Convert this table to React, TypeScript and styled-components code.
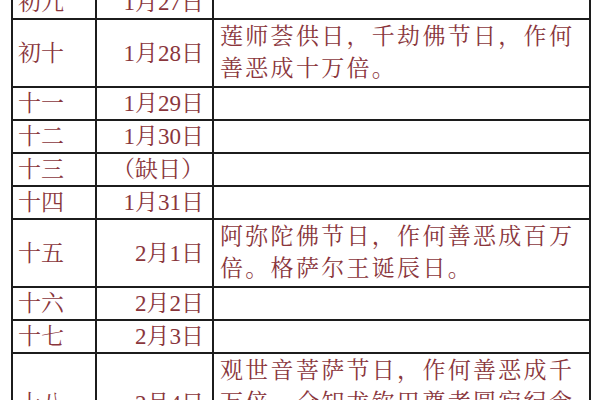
import React from "react";
import styled, { createGlobalStyle } from "styled-components";

const Global = createGlobalStyle`
  html, body { margin: 0; padding: 0; background: #ffffff; }
  body { overflow: hidden; width: 600px; height: 400px; }
`;

const Page = styled.div`
  width: 600px;
  height: 400px;
  overflow: hidden;
  background: #ffffff;
`;

const Table = styled.table`
  border-collapse: collapse;
  table-layout: fixed;
  width: 578px;
  margin: -15px 0 0 11px;
  font-family: "Liberation Serif", "Noto Serif CJK SC", "Noto Sans CJK SC", serif;
  font-size: 23px;
  color: #8a363c;
`;

const Col = styled.col<{ $w: number }>`
  width: ${(p) => p.$w}px;
`;

const Cell = styled.td<{ $align?: "left" | "right" }>`
  border: 2px solid #1c1c1c;
  padding: 0 ${(p) => (p.$align === "right" ? "8px" : "0")} 0 ${(p) => (p.$align === "right" ? "0" : "5px")};
  text-align: ${(p) => p.$align ?? "left"};
  vertical-align: middle;
  line-height: 31px;
  white-space: nowrap;
`;

const NoteCell = styled.td`
  border: 2px solid #1c1c1c;
  padding: 1px 2px 1px 6px;
  line-height: 32px;
  letter-spacing: 2.3px;
  vertical-align: middle;
  white-space: nowrap;
`;

const NoteLine = styled.div`
  display: block;
`;

type Row = { day: string; date: string; note?: string[] };

const rows: Row[] = [
  { day: "初九", date: "1月27日" },
  { day: "初十", date: "1月28日", note: ["莲师荟供日，千劫佛节日，作何", "善恶成十万倍。"] },
  { day: "十一", date: "1月29日" },
  { day: "十二", date: "1月30日" },
  { day: "十三", date: "（缺日）" },
  { day: "十四", date: "1月31日" },
  { day: "十五", date: "2月1日", note: ["阿弥陀佛节日，作何善恶成百万", "倍。格萨尔王诞辰日。"] },
  { day: "十六", date: "2月2日" },
  { day: "十七", date: "2月3日" },
  {
    day: "十八",
    date: "2月4日",
    note: ["观世音菩萨节日，作何善恶成千", "万倍。全知龙钦巴尊者圆寂纪念", "日。"],
  },
];

export default function App() {
  return (
    <Page>
      <Global />
      <Table>
        <colgroup>
          <Col $w={84} />
          <Col $w={117} />
          <Col $w={377} />
        </colgroup>
        <tbody>
          {rows.map((r) => (
            <tr key={r.day}>
              <Cell>{r.day}</Cell>
              <Cell $align="right">{r.date}</Cell>
              <NoteCell>
                {r.note?.map((line, i) => (
                  <NoteLine key={i}>{line}</NoteLine>
                ))}
              </NoteCell>
            </tr>
          ))}
        </tbody>
      </Table>
    </Page>
  );
}
